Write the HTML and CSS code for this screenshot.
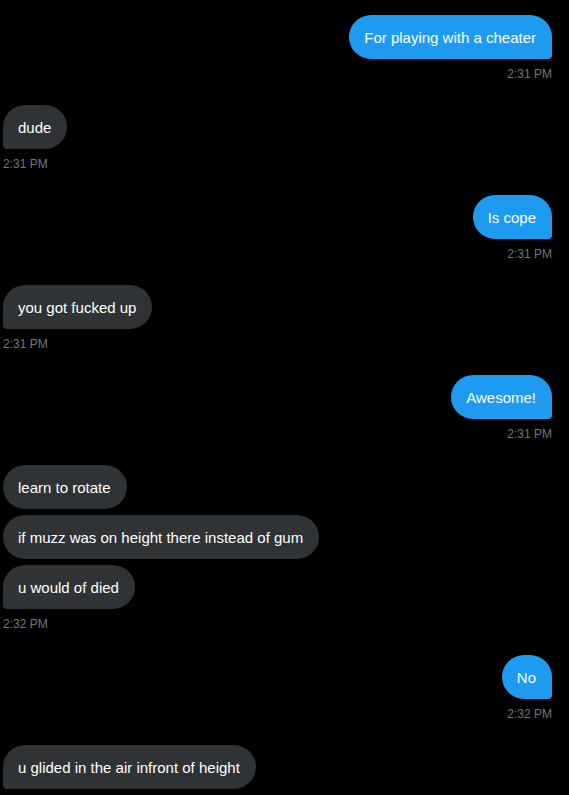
FILE: index.html
```html
<!DOCTYPE html>
<html lang="en">
<head>
  <meta charset="UTF-8">
  <title>Messages</title>
  <link rel="stylesheet" href="styles.css">
</head>
<body>
  <div class="chat">
    <div class="group sent">
      <div class="bubble last">For playing with a cheater</div>
      <div class="time">2:31 PM</div>
    </div>
    <div class="group received">
      <div class="bubble last">dude</div>
      <div class="time">2:31 PM</div>
    </div>
    <div class="group sent">
      <div class="bubble last">Is cope</div>
      <div class="time">2:31 PM</div>
    </div>
    <div class="group received">
      <div class="bubble last">you got fucked up</div>
      <div class="time">2:31 PM</div>
    </div>
    <div class="group sent">
      <div class="bubble last">Awesome!</div>
      <div class="time">2:31 PM</div>
    </div>
    <div class="group received">
      <div class="bubble">learn to rotate</div>
      <div class="bubble">if muzz was on height there instead of gum</div>
      <div class="bubble last">u would of died</div>
      <div class="time">2:32 PM</div>
    </div>
    <div class="group sent">
      <div class="bubble last">No</div>
      <div class="time">2:32 PM</div>
    </div>
    <div class="group received">
      <div class="bubble last">u glided in the air infront of height</div>
    </div>
  </div>
</body>
</html>
```

FILE: styles.css
```css
body {
  margin: 0;
  background: #000;
  font-family: 'Liberation Sans', Arial, sans-serif;
  color: #fff;
}

.chat {
  display: flex;
  flex-direction: column;
  padding: 15px 17px 0 3px;
  gap: 23px;
}

.group {
  display: flex;
  flex-direction: column;
  gap: 6px;
}

.sent {
  align-items: flex-end;
}

.received {
  align-items: flex-start;
}

.bubble {
  font-size: 15px;
  line-height: 20px;
  padding: 13px 16px 11px 15px;
  border-radius: 22px;
}

.sent .bubble {
  background: #1d9bf0;
}

.received .bubble {
  background: #2f3336;
}

.sent .bubble.last {
  border-bottom-right-radius: 4px;
}

.received .bubble.last {
  border-bottom-left-radius: 4px;
}

.time {
  margin-top: 1px;
  font-size: 12px;
  line-height: 16px;
  color: #71767b;
}
```
